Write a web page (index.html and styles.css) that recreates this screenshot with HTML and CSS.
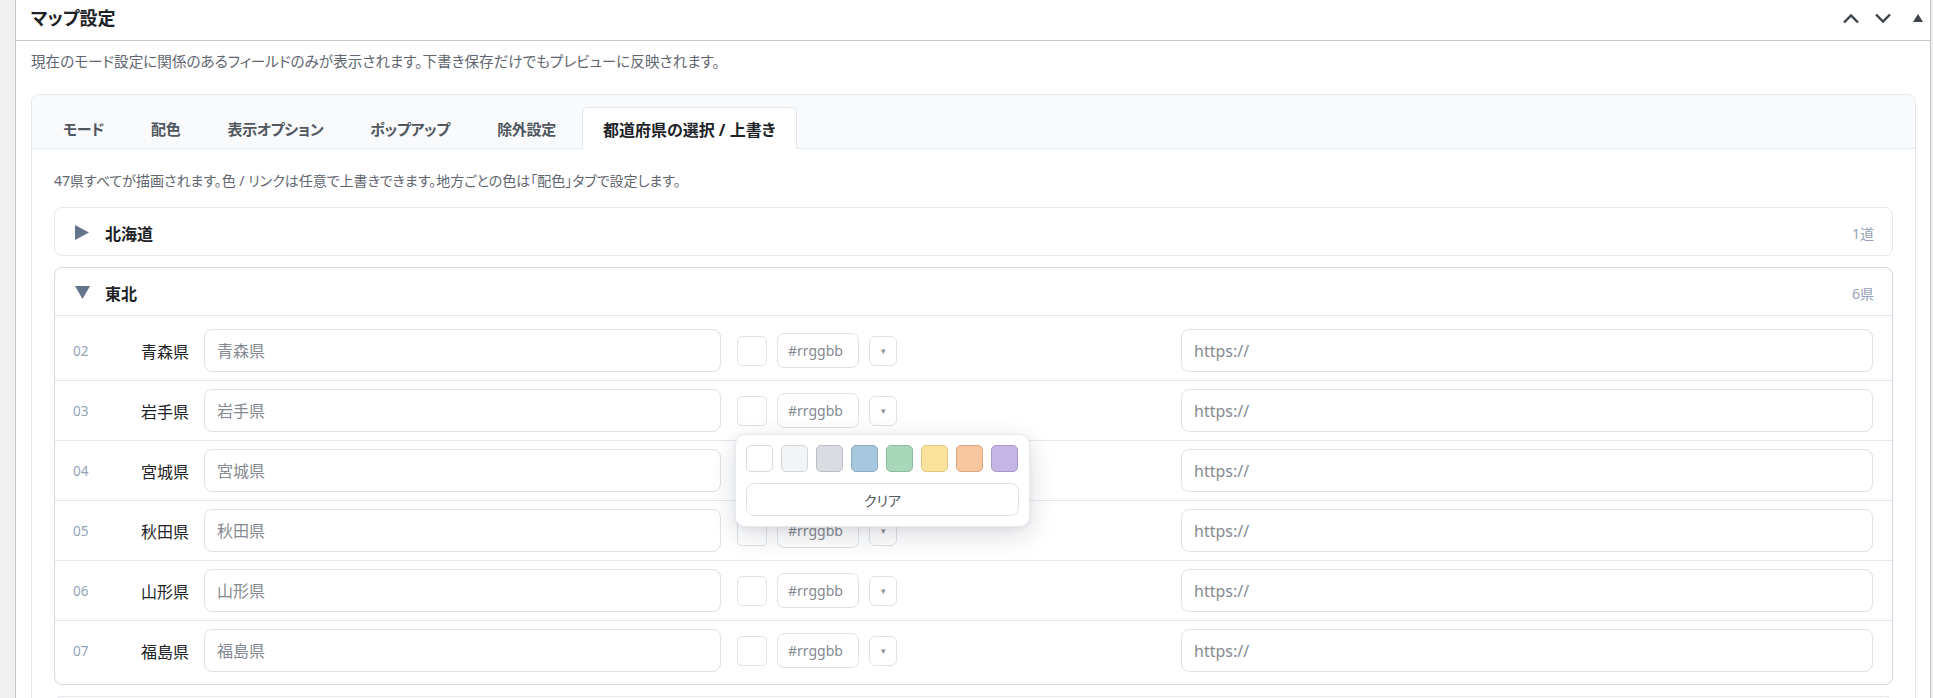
FILE: index.html
```html
<!DOCTYPE html>
<html lang="ja">
<head>
<meta charset="utf-8">
<title>マップ設定</title>
<link rel="stylesheet" href="styles.css">
</head>
<body>
<div class="wrap">
  <div class="panel">
    <div class="panel-head">
      <h2 class="panel-title">マップ設定</h2>
      <div class="head-icons">
        <svg class="hi-up" width="18" height="11" viewBox="0 0 18 11"><path d="M2 9.5 L9 2.5 L16 9.5" fill="none" stroke="#3c434a" stroke-width="2.4"/></svg>
        <svg class="hi-down" width="18" height="11" viewBox="0 0 18 11"><path d="M2 1.5 L9 8.5 L16 1.5" fill="none" stroke="#3c434a" stroke-width="2.4"/></svg>
        <svg class="hi-tri" width="10" height="8" viewBox="0 0 10 8"><path d="M0 8 L5 0 L10 8Z" fill="#3c434a"/></svg>
      </div>
    </div>
    <div class="panel-body">
      <p class="desc">現在のモード設定に関係のあるフィールドのみが表示されます。下書き保存だけでもプレビューに反映されます。</p>
      <div class="tabs-box">
        <div class="tab-nav">
          <div class="tab">モード</div>
          <div class="tab">配色</div>
          <div class="tab">表示オプション</div>
          <div class="tab">ポップアップ</div>
          <div class="tab">除外設定</div>
          <div class="tab active">都道府県の選択 / 上書き</div>
        </div>
        <div class="tab-content">
          <p class="intro">47県すべてが描画されます。色 / リンクは任意で上書きできます。地方ごとの色は「配色」タブで設定します。</p>

          <div class="acc">
            <div class="acc-head">
              <span class="acc-icon"><svg width="14" height="15" viewBox="0 0 14 15"><path d="M0 0 L14 7.5 L0 15Z" fill="#64748b"/></svg></span>
              <span class="acc-title">北海道</span>
              <span class="acc-count">1道</span>
            </div>
          </div>

          <div class="acc open">
            <div class="acc-head">
              <span class="acc-icon"><svg width="15" height="13" viewBox="0 0 15 13"><path d="M0 0 H15 L7.5 13Z" fill="#64748b"/></svg></span>
              <span class="acc-title">東北</span>
              <span class="acc-count">6県</span>
            </div>
            <div class="acc-list">
              <div class="row">
                <span class="num">02</span>
                <span class="label">青森県</span>
                <input class="inp" type="text" placeholder="青森県">
                <div class="color">
                  <span class="sw"></span>
                  <input class="hex" type="text" placeholder="#rrggbb">
                  <span class="dd">▾</span>
                </div>
                <input class="inp" type="text" placeholder="https://">
              </div>
              <div class="row">
                <span class="num">03</span>
                <span class="label">岩手県</span>
                <input class="inp" type="text" placeholder="岩手県">
                <div class="color">
                  <span class="sw"></span>
                  <input class="hex" type="text" placeholder="#rrggbb">
                  <span class="dd">▾</span>
                  <div class="popup">
                    <div class="pal">
                      <span class="p1"></span><span class="p2"></span><span class="p3"></span><span class="p4"></span><span class="p5"></span><span class="p6"></span><span class="p7"></span><span class="p8"></span>
                    </div>
                    <button class="clear" type="button">クリア</button>
                  </div>
                </div>
                <input class="inp" type="text" placeholder="https://">
              </div>
              <div class="row">
                <span class="num">04</span>
                <span class="label">宮城県</span>
                <input class="inp" type="text" placeholder="宮城県">
                <div class="color">
                  <span class="sw"></span>
                  <input class="hex" type="text" placeholder="#rrggbb">
                  <span class="dd">▾</span>
                </div>
                <input class="inp" type="text" placeholder="https://">
              </div>
              <div class="row">
                <span class="num">05</span>
                <span class="label">秋田県</span>
                <input class="inp" type="text" placeholder="秋田県">
                <div class="color">
                  <span class="sw"></span>
                  <input class="hex" type="text" placeholder="#rrggbb">
                  <span class="dd">▾</span>
                </div>
                <input class="inp" type="text" placeholder="https://">
              </div>
              <div class="row">
                <span class="num">06</span>
                <span class="label">山形県</span>
                <input class="inp" type="text" placeholder="山形県">
                <div class="color">
                  <span class="sw"></span>
                  <input class="hex" type="text" placeholder="#rrggbb">
                  <span class="dd">▾</span>
                </div>
                <input class="inp" type="text" placeholder="https://">
              </div>
              <div class="row">
                <span class="num">07</span>
                <span class="label">福島県</span>
                <input class="inp" type="text" placeholder="福島県">
                <div class="color">
                  <span class="sw"></span>
                  <input class="hex" type="text" placeholder="#rrggbb">
                  <span class="dd">▾</span>
                </div>
                <input class="inp" type="text" placeholder="https://">
              </div>
            </div>
          </div>

          <div class="acc acc-next">
            <div class="acc-head"></div>
          </div>
        </div>
      </div>
    </div>
  </div>
</div>
</body>
</html>
```
FILE: styles.css
```css
* { box-sizing: border-box; }
html, body { margin: 0; }
body {
  background: #f0f0f1;
  font-family: "Noto Sans", "Noto Sans CJK JP", sans-serif;
  font-feature-settings: "palt" 1;
  color: #1d2327;
  overflow: hidden;
}
.wrap { padding: 0 2px 0 15px; }
.panel {
  background: #fff;
  border-left: 1px solid #c3c4c7;
  border-right: 1px solid #c3c4c7;
  min-height: 698px;
}
.panel-head {
  height: 41px;
  border-bottom: 1px solid #c3c4c7;
  display: flex;
  align-items: center;
  padding: 0 7px 4px 15px;
}
.panel-title {
  flex: 1;
  margin: 0;
  font-size: 18px;
  font-weight: 700;
  line-height: 1;
  color: #1d2327;
}
.head-icons { display: flex; align-items: center; }
.head-icons svg { display: block; }
.hi-down { margin-left: 14px; }
.hi-tri { margin-left: 21px; }

.panel-body { padding: 10px 14px 0 15px; }
.desc {
  margin: 0;
  font-size: 14.6px;
  line-height: 20px;
  color: #5f6670;
}
.tabs-box {
  margin-top: 23px;
  border: 1px solid #e2e8f0;
  border-radius: 8px;
  background: #fff;
}
.tab-nav {
  display: flex;
  align-items: flex-end;
  gap: 5px;
  padding: 12px 10px 0;
  background: #f8fafc;
  border-bottom: 1px solid #e2e8f0;
  border-radius: 8px 8px 0 0;
}
.tab {
  height: 42px;
  margin-bottom: -1px;
  padding: 0 20px;
  border: 1px solid transparent;
  border-bottom: none;
  border-radius: 6px 6px 0 0;
  display: flex;
  align-items: center;
  font-size: 15px;
  letter-spacing: -0.3px;
  font-weight: 600;
  color: #50575e;
  white-space: nowrap;
}
.tab.active {
  background: #fff;
  border-color: #e2e8f0;
  color: #1d2327;
  font-weight: 700;
  font-size: 16px;
  letter-spacing: 0;
}
.tab-content { padding: 22px 22px 40px; }
.intro {
  margin: 0 0 16px;
  font-size: 14px;
  line-height: 20px;
  color: #5f6670;
}
.acc {
  border: 1px solid #e2e8f0;
  border-radius: 8px;
  margin-bottom: 11px;
  background: #fff;
}
.acc.open { border-color: #d3dae4; }
.acc-head {
  height: 47px;
  display: flex;
  align-items: center;
  gap: 15px;
  padding: 2px 18px 0 20px;
}
.acc.open .acc-head {
  height: 48px;
  border-bottom: 1px solid #e2e8f0;
}
.acc-icon { width: 15px; display: flex; align-items: center; }
.acc-icon svg { display: block; }
.acc-title {
  flex: 1;
  font-size: 16px;
  font-weight: 700;
  color: #1d2327;
}
.acc-count { font-size: 14px; color: #94a3b8; }

.acc-list { padding: 5px 0 4px; }
.row {
  display: grid;
  grid-template-columns: 52px 47px 517px 428px 1fr;
  column-gap: 16px;
  align-items: center;
  padding: 8px 19px 8px 18px;
  border-bottom: 1px solid #e2e8f0;
}
.row:last-child { border-bottom: none; }
.num { font-size: 13.5px; color: #94a3b8; }
.label {
  font-size: 16px;
  text-align: right;
  white-space: nowrap;
  color: #1d2327;
}
.inp {
  width: 100%;
  height: 43px;
  border: 1px solid #dde3ea;
  border-radius: 8px;
  padding: 0 12px;
  font-family: inherit;
  font-size: 16px;
  color: #1d2327;
  background: #fff;
  outline: none;
}
.inp::placeholder, .hex::placeholder { color: #858a92; }
.color {
  position: relative;
  display: flex;
  align-items: center;
  gap: 10px;
  height: 35px;
}
.sw {
  width: 30px;
  height: 30px;
  border: 1px solid #dde3ea;
  border-radius: 5px;
  background: #fff;
}
.hex {
  width: 82px;
  height: 35px;
  border: 1px solid #dde3ea;
  border-radius: 7px;
  padding: 0 10px;
  font-family: inherit;
  font-size: 14px;
  background: #fff;
  outline: none;
}
.dd {
  width: 28px;
  height: 30px;
  border: 1px solid #dde3ea;
  border-radius: 6px;
  background: #fff;
  display: flex;
  align-items: center;
  justify-content: center;
  font-size: 9px;
  color: #8a8f96;
}
.popup {
  position: absolute;
  top: calc(100% + 6px);
  left: -2px;
  width: 295px;
  padding: 10px;
  background: #fff;
  border: 1px solid #e5e9f0;
  border-radius: 10px;
  box-shadow: 0 8px 28px rgba(15, 23, 42, 0.14), 0 2px 6px rgba(15, 23, 42, 0.06);
  z-index: 10;
}
.pal { display: flex; gap: 8px; }
.pal span {
  width: 27px;
  height: 27px;
  border-radius: 5px;
  border: 1px solid;
}
.p1 { background: #ffffff; border-color: #d7dbe0 !important; }
.p2 { background: #f3f4f6; border-color: #d2d6dc !important; }
.p3 { background: #d9dce1; border-color: #b9bec5 !important; }
.p4 { background: #a7c7df; border-color: #8dabc3 !important; }
.p5 { background: #a8d7ba; border-color: #8ebc9f !important; }
.p6 { background: #fbe39d; border-color: #e0c880 !important; }
.p7 { background: #f7c59e; border-color: #d9a681 !important; }
.p8 { background: #c5b5e7; border-color: #a999ca !important; }
.clear {
  display: block;
  margin-top: 11px;
  width: 100%;
  height: 33px;
  border: 1px solid #dde3ea;
  border-radius: 8px;
  background: #fff;
  font-family: inherit;
  font-feature-settings: "palt" 1;
  font-size: 14px;
  color: #50575e;
}
```
